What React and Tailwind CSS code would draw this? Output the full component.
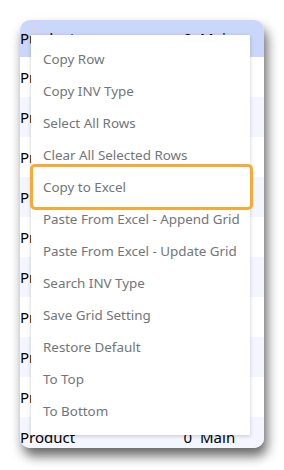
import { useState } from 'react';

const rows = Array.from({ length: 10 }, () => ({ name: 'Product', qty: 0, loc: 'Main' }));

const menuItems = [
    'Copy Row',
    'Copy INV Type',
    'Select All Rows',
    'Clear All Selected Rows',
    'Copy to Excel',
    'Paste From Excel - Append Grid',
    'Paste From Excel - Update Grid',
    'Search INV Type',
    'Save Grid Setting',
    'Restore Default',
    'To Top',
    'To Bottom',
];

export default function App() {
    const [focused] = useState('Copy to Excel');

    return (
        <div className="w-[284px] h-[470px] bg-white pt-5 pl-5" style={{ fontFamily: '"Noto Sans", "Open Sans", sans-serif' }}>
            <div className="relative w-[244px] h-[428px] rounded-[10px] bg-white overflow-hidden shadow-[3px_8px_12px_rgba(0,0,0,0.6)]">
                {/* Grid header */}
                <div className="h-[37px] bg-[#cbd6fb] flex items-center text-[15px] text-black">
                    <span className="flex-1">Product</span>
                    <span className="w-[10px] text-right">0</span>
                    <span className="w-[72px] pl-2">Main</span>
                </div>
                {/* Grid rows */}
                {rows.map((r, i) => (
                    <div key={i} className={`h-[40px] flex items-center text-[15px] text-black ${i % 2 ? 'bg-[#f3f6fe]' : 'bg-white'}`}>
                        <span className="flex-1">{r.name}</span>
                        <span className="w-[10px] text-right">{r.qty}</span>
                        <span className="w-[72px] pl-2">{r.loc}</span>
                    </div>
                ))}

                {/* I-beam cursor */}
                <svg className="absolute left-[10px] top-[8px]" width="7" height="16" viewBox="0 0 7 16">
                    <path d="M0.5 0.5h2.5v15h-2.5M6.5 0.5h-2.5v15h2.5" fill="none" stroke="#d8d8d8" strokeWidth="1" />
                </svg>

                {/* Context menu */}
                <div className="absolute left-[11px] top-[15px] w-[219px] bg-white py-2 shadow-[0_1px_4px_rgba(0,0,0,0.2)]">
                    {menuItems.map(item => (
                        <div key={item} className="relative h-8 flex items-center pl-3 text-[13.4px] text-[#72757b] whitespace-nowrap">
                            {item}
                            {item === focused && (
                                <span className="absolute left-[-1px] right-[-3px] top-[-7px] bottom-[-7px] rounded-[5px] border-[3px] border-[#f7aa38]" />
                            )}
                        </div>
                    ))}
                </div>
            </div>
        </div>
    );
}
